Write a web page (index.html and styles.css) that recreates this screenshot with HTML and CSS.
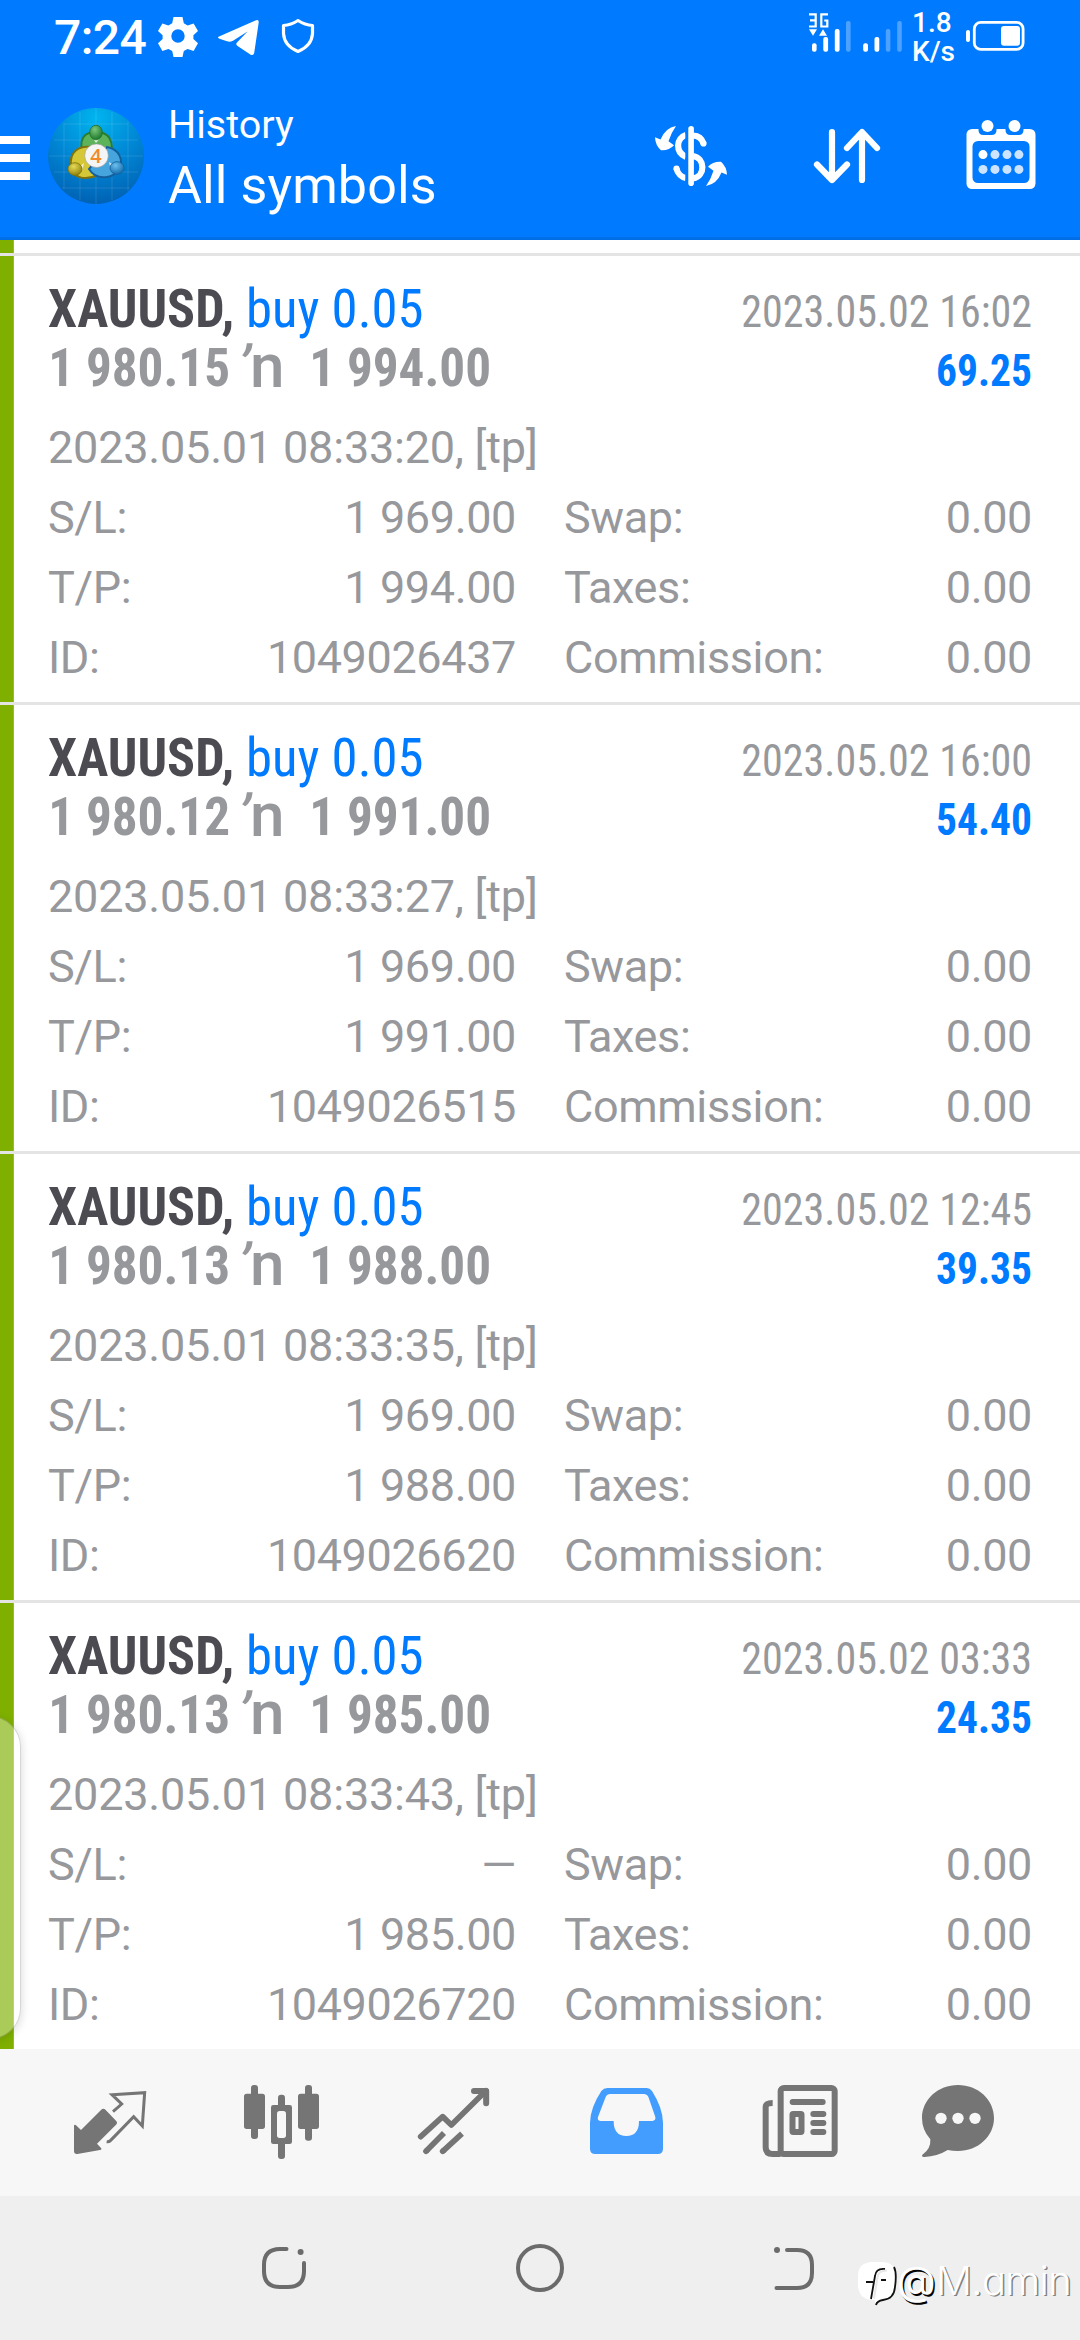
FILE: index.html
```html
<!DOCTYPE html>
<html lang="en">
<head>
<meta charset="utf-8">
<title>History</title>
<link rel="stylesheet" href="styles.css">
</head>
<body>
<div class="screen">
  <header class="top">
    <div class="status">
      <div class="status-left">
        <span class="clock">7:24</span>
        <svg class="st-icons" width="164" height="72" viewBox="156 0 164 72" fill="#fff">
          <path fill-rule="evenodd" d="M173.500 17h9l1.300 6.200 3.800 2.200 6-2 4.400 7.600-4.600 4.300v3.800l4.600 4.200-4.400 7.600-6-2-3.800 2.200-1.300 5.900h-9l-1.300-5.900-3.800-2.200-6 2-4.400-7.600 4.600-4.200v-3.800l-4.600-4.300 4.400-7.600 6 2 3.800-2.200zM178 29.300a6.700 6.700 0 1 0 0 13.400 6.700 6.700 0 0 0 0-13.400z"/>
          <path d="M219 36.500 256 20.300q3-1 2.700 2.200l-4.500 30.500q-.8 3-3.500 1.700l-13.500-9q-1.800-1.400-.2-3.200l10.500-11-14.500 9.200q-3 1.700-6 .6l-7.600-2.600q-2.600-1-.4-2.200z"/>
          <path d="M298 20.500q7 4.500 14.500 5v8q-.8 12.500-14.500 18-13.700-5.500-14.500-18v-8q7.500-.5 14.500-5z" fill="none" stroke="#fff" stroke-width="3.200" stroke-linejoin="round"/>
        </svg>
      </div>
      <div class="status-right">
        <svg width="98" height="72" viewBox="808 0 98 72" fill="#fff">
          <path d="M809 14.300h6.700v12.200H809M810 20.400h5.700M828 14.300h-6.700v12.200h6v-6h-3" fill="none" stroke="#fff" stroke-width="2.200"/>
          <path d="M809 29.200h8l-4 6.600zM819 35.800h8l-4-6.600z"/>
          <rect x="812" y="43.300" width="4.600" height="8.500" rx="2"/>
          <rect x="823.300" y="37" width="4.800" height="14.800" rx="2"/>
          <rect x="834.800" y="29" width="4.800" height="22.800" rx="2"/>
          <rect x="846" y="21" width="4.600" height="30.800" rx="2" opacity=".3"/>
          <rect x="863.200" y="43.300" width="4.800" height="8.500" rx="2"/>
          <rect x="874.500" y="37" width="4.800" height="14.800" rx="2"/>
          <rect x="885.800" y="29" width="4.600" height="22.800" rx="2" opacity=".3"/>
          <rect x="897.200" y="21" width="4.600" height="30.800" rx="2" opacity=".3"/>
        </svg>
        <span class="speed">1.8<br>K/s</span>
        <svg width="62" height="72" viewBox="964 0 62 72">
          <rect x="966" y="30" width="4" height="12" rx="2" fill="#fff"/>
          <rect x="974.300" y="22.400" width="48.800" height="27" rx="6.500" fill="none" stroke="#fff" stroke-width="2.800"/>
          <rect x="1001" y="26" width="19" height="19.700" rx="3" fill="#fff"/>
        </svg>
      </div>
    </div>
    <div class="appbar">
      <div class="menu"><i></i><i></i><i></i></div>
      <svg class="logo" width="96" height="96" viewBox="48 108 96 96">
        <defs>
          <radialGradient id="bg" cx=".5" cy=".1" r=".9"><stop offset="0" stop-color="#00b4ee"/><stop offset=".5" stop-color="#0089d6"/><stop offset="1" stop-color="#0062b4"/></radialGradient>
          <radialGradient id="gr" cx=".4" cy=".3" r=".7"><stop offset="0" stop-color="#7cc67c"/><stop offset="1" stop-color="#1d7a2c"/></radialGradient>
          <radialGradient id="ye" cx=".4" cy=".3" r=".7"><stop offset="0" stop-color="#e6da58"/><stop offset="1" stop-color="#93850d"/></radialGradient>
          <radialGradient id="bl" cx=".4" cy=".3" r=".7"><stop offset="0" stop-color="#6cc0ee"/><stop offset="1" stop-color="#146cab"/></radialGradient>
        </defs>
        <circle cx="96" cy="156" r="48" fill="url(#bg)"/>
        <path d="M64 123v66M80 112v88M96 108v96M112 112v88M128 121v70M64 124h64M54 140h84M49 156h94M54 172h84M62 188h68" stroke="#fff" stroke-opacity=".11" fill="none"/>
        <path d="M84 158c-7-20 1-26 12-26s20 6 14 30z" fill="#5cb35a" stroke="#2b7d32" stroke-width="2"/>
        <path d="M91 147c-12-2-22 5-20 19s16 14 27 9z" fill="#d5c736" stroke="#80720c" stroke-width="2"/>
        <path d="M107 147c12 2 17 13 12 22s-22 13-30 0z" fill="#47a5dd" stroke="#155f9c" stroke-width="2"/>
        <path d="M84 163l-5 4 3 4zM109 162l6 4-4 5zM92 137l4 6 5-6z" fill="#fff" opacity=".75"/>
        <ellipse cx="96" cy="132.500" rx="6.300" ry="7.300" fill="url(#gr)" stroke="#1f6e2b" stroke-width=".8"/>
        <ellipse cx="75" cy="169" rx="7" ry="6.300" fill="url(#ye)" stroke="#80720c" stroke-width=".8"/>
        <ellipse cx="117" cy="168" rx="7" ry="6.300" fill="url(#bl)" stroke="#155f9c" stroke-width=".8"/>
        <circle cx="96.500" cy="155.700" r="11.800" fill="#f5f5f5" stroke="#999" stroke-width=".6"/>
        <text x="96" y="163" text-anchor="middle" class="logo-4">4</text>
      </svg>
      <div class="titles">
        <div class="sub">History</div>
        <div class="title">All symbols</div>
      </div>
      <svg class="swap" width="74" height="66" viewBox="653 123 74 66">
        <g fill="none" stroke="#fff" stroke-width="6.200">
          <path d="M685 135c-10 3-11 17 0 22M675.500 168.500c1 5 5 8.500 9.500 9.500"/>
          <path d="M692 135.500c5 .3 9 3 10.500 8M692 156c12 2 13 20 0 22.500"/>
        </g>
        <g fill="#fff"><circle cx="675.500" cy="168.500" r="3.100"/><circle cx="702.500" cy="143.500" r="3.100"/></g>
        <path d="M684.300 124h3v64h-3z" fill="#007aff"/>
        <rect x="687.300" y="126" width="5.600" height="60" rx="2.800" fill="#fff"/>
        <path id="swirl" d="M675 126q-11 2-15.500 13.500l-5.500-2.300q.3 8 6 13 8 .5 13-5l-5.500-4Q670 133 675 126z" fill="#fff"/>
        <use href="#swirl" transform="rotate(180 690 156)"/>
      </svg>
      <svg class="sort" width="70" height="60" viewBox="811 126 70 60" fill="none" stroke="#fff" stroke-width="6.200" stroke-linecap="round" stroke-linejoin="round">
        <path d="M831 132v47.500M816 164.500l15 15.500 15-15.500M861 180v-47.500M846 148l15-16 15 16"/>
      </svg>
      <svg class="cal" width="70" height="70" viewBox="965.500 120 70 70">
        <rect x="966" y="129" width="69" height="60" rx="5.500" fill="#fff"/>
        <path d="M978 128h18v2q0 5-5 5h-8q-5 0-5-5zM1005 128h18v2q0 5-5 5h-8q-5 0-5-5z" fill="#007aff"/>
        <rect x="972" y="141" width="57" height="42" rx="5.500" fill="#007aff"/>
        <g fill="#fff"><circle cx="987" cy="126" r="6"/><circle cx="1014" cy="126" r="6"/><circle cx="982.500" cy="154.600" r="4.500"/></g>
        <g fill="#cce4ff"><circle cx="994.500" cy="154.600" r="4.500"/><circle cx="1006.500" cy="154.600" r="4.500"/><circle cx="1018.400" cy="154.600" r="4.500"/><circle cx="982.500" cy="169.400" r="4.500"/><circle cx="994.500" cy="169.400" r="4.500"/><circle cx="1006.500" cy="169.400" r="4.500"/><circle cx="1018.400" cy="169.400" r="4.500"/></g>
      </svg>
    </div>
  </header>

  <main class="list">
    <article class="deal">
      <div class="line"><b class="sym">XAUUSD,</b><span class="side">buy 0.05</span><span class="closed">2023.05.02 16:02</span></div>
      <div class="line"><b class="price">1 980.15</b><span class="to"><i>’</i>n</span><b class="price">1 994.00</b><b class="profit">69.25</b></div>
      <div class="opened">2023.05.01 08:33:20, [tp]</div>
      <div class="facts">
        <div><span>S/L:</span><span>1 969.00</span></div><div><span>Swap:</span><span>0.00</span></div>
        <div><span>T/P:</span><span>1 994.00</span></div><div><span>Taxes:</span><span>0.00</span></div>
        <div><span>ID:</span><span>1049026437</span></div><div><span>Commission:</span><span>0.00</span></div>
      </div>
    </article>
    <article class="deal">
      <div class="line"><b class="sym">XAUUSD,</b><span class="side">buy 0.05</span><span class="closed">2023.05.02 16:00</span></div>
      <div class="line"><b class="price">1 980.12</b><span class="to"><i>’</i>n</span><b class="price">1 991.00</b><b class="profit">54.40</b></div>
      <div class="opened">2023.05.01 08:33:27, [tp]</div>
      <div class="facts">
        <div><span>S/L:</span><span>1 969.00</span></div><div><span>Swap:</span><span>0.00</span></div>
        <div><span>T/P:</span><span>1 991.00</span></div><div><span>Taxes:</span><span>0.00</span></div>
        <div><span>ID:</span><span>1049026515</span></div><div><span>Commission:</span><span>0.00</span></div>
      </div>
    </article>
    <article class="deal">
      <div class="line"><b class="sym">XAUUSD,</b><span class="side">buy 0.05</span><span class="closed">2023.05.02 12:45</span></div>
      <div class="line"><b class="price">1 980.13</b><span class="to"><i>’</i>n</span><b class="price">1 988.00</b><b class="profit">39.35</b></div>
      <div class="opened">2023.05.01 08:33:35, [tp]</div>
      <div class="facts">
        <div><span>S/L:</span><span>1 969.00</span></div><div><span>Swap:</span><span>0.00</span></div>
        <div><span>T/P:</span><span>1 988.00</span></div><div><span>Taxes:</span><span>0.00</span></div>
        <div><span>ID:</span><span>1049026620</span></div><div><span>Commission:</span><span>0.00</span></div>
      </div>
    </article>
    <article class="deal">
      <div class="line"><b class="sym">XAUUSD,</b><span class="side">buy 0.05</span><span class="closed">2023.05.02 03:33</span></div>
      <div class="line"><b class="price">1 980.13</b><span class="to"><i>’</i>n</span><b class="price">1 985.00</b><b class="profit">24.35</b></div>
      <div class="opened">2023.05.01 08:33:43, [tp]</div>
      <div class="facts">
        <div><span>S/L:</span><span>—</span></div><div><span>Swap:</span><span>0.00</span></div>
        <div><span>T/P:</span><span>1 985.00</span></div><div><span>Taxes:</span><span>0.00</span></div>
        <div><span>ID:</span><span>1049026720</span></div><div><span>Commission:</span><span>0.00</span></div>
      </div>
    </article>
    <div class="handle"></div>
  </main>

  <nav class="tabs">
    <svg viewBox="-48 27 516 441">
      <path d="M102 256q3-4 6 0l15 14 60-60q7-7 14 0l31 32q6 6 0 12l-57 57 12 13q4 5-3 6l-68 12q-10 1-10-9z" fill="#757575"/>
      <path d="M219 215l26-23-29-28 98-6-7 100-26-28-69 71q-5 5-12 4" fill="none" stroke="#757575" stroke-width="9"/>
    </svg>
    <svg viewBox="468 27 516 441" fill="#757575">
      <rect x="633" y="135" width="21" height="162" rx="9"/><rect x="612" y="161" width="63" height="106" rx="8"/>
      <rect x="795" y="135" width="21" height="167" rx="9"/><rect x="774" y="161" width="63" height="106" rx="8"/>
      <rect x="714" y="164" width="21" height="193" rx="9"/><rect x="693" y="195" width="63" height="117" rx="7"/>
      <rect x="711" y="213" width="27" height="81" rx="8" fill="#f7f7f7"/>
    </svg>
    <svg viewBox="984 27 516 441" fill="none" stroke="#757575" stroke-width="17" stroke-linejoin="round">
      <path d="M1142 290l66-60 26 25 104-103M1158 334l2-2M1208 334l2-2" stroke-linecap="round"/>
      <path d="M1158 334l54-55M1208 334l58-53"/>
      <path d="M1302 153h36.500v37" stroke-linecap="round" stroke-width="18"/>
    </svg>
    <svg viewBox="0 27 516 441">
      <path fill="#439dff" fill-rule="evenodd" d="M202 144H320q10 0 16 9 32 50 33 95v78q0 16-16 16H166q-16 0-16-16v-78q1-45 34-95 7-9 18-9zM211 162q-10 0-14 9l-23 60q-3 11 7 12h40q0 45 38 45t38-45h40q11-1 9-12l-20-58q-4-11-15-11z"/>
    </svg>
    <svg viewBox="516 27 516 441" fill="none" stroke="#757575" stroke-width="18">
      <rect x="722" y="144" width="162" height="198" rx="10"/>
      <path d="M698 189q-21 0-21 12v120q0 21 21 21h24"/>
      <path d="M758 186h90M820 222h30M820 249h30M820 276h30" stroke-linecap="round"/>
      <rect x="757.500" y="222" width="27" height="54" rx="2"/>
    </svg>
    <svg viewBox="1032 27 516 441">
      <path d="M1254 135c60 0 108 44 108 99s-48 99-108 99q-16 0-31-3-30 19-70 21-12-1-4-8 24-18 22-45-25-28-25-64c0-55 48-99 108-99z" fill="#757575"/>
      <g fill="#f7f7f7"><circle cx="1203" cy="235" r="17"/><circle cx="1254" cy="235" r="17"/><circle cx="1305" cy="235" r="17"/></g>
    </svg>
  </nav>

  <footer class="sysnav">
    <svg viewBox="0 2196 360 144" fill="none" stroke="#6b6b6b" stroke-width="4" stroke-linecap="round">
      <path d="M286.500 2249H280q-16 0-16 16v6q0 16 16 16h8q16 0 16-16v-8"/><circle cx="300.600" cy="2252" r="3" fill="#6b6b6b" stroke="none"/>
    </svg>
    <svg viewBox="360 2196 360 144" fill="none" stroke="#6b6b6b" stroke-width="4"><circle cx="540" cy="2268" r="22"/></svg>
    <svg viewBox="720 2196 360 144" fill="none" stroke="#6b6b6b" stroke-width="4" stroke-linecap="round">
      <path d="M787 2250h10q15 0 15 15v8q0 15-15 15h-20.500"/><circle cx="777" cy="2250" r="3" fill="#6b6b6b" stroke="none"/>
    </svg>
    <div class="mark">
      <svg width="42" height="46" viewBox="0 0 42 46">
        <path d="M17 1h10q13 1 13 15v7q0 13-12 15-6 2-7 6l-3-5q-15 0-16-14V15Q2 1 17 1z" fill="#fff"/>
        <path d="M38 6q3 6 1 20-1 12-12 13-6 1-7 5M29 8q-9-1-10 7l-4 23M10 21h7M25 19h5" fill="none" stroke="#111" stroke-width="1.800"/>
        <path d="M31 9.500q-9 0-9.500 7l-3.500 21" fill="none" stroke="#e8e8e8" stroke-width="2"/>
      </svg>
      <span class="at">@</span><span class="name">M.amin</span>
    </div>
  </footer>
</div>
</body>
</html>
```
FILE: styles.css
```css
* { box-sizing: border-box; }
body { margin: 0; font-family: Roboto, sans-serif; }
svg { display: block; flex: none; }
.screen {
  width: 1080px;
  height: 2340px;
  display: flex;
  flex-direction: column;
  overflow: hidden;
  background: #fff;
}

/* header */
.top { height: 240px; background: #007aff; color: #fff; border-bottom: 3px solid #006ee6; }
.status { height: 72px; display: flex; justify-content: space-between; padding: 0 54px; }
.status-left, .status-right { display: flex; }
.clock { width: 102px; font-size: 48px; font-weight: 500; line-height: 75px; letter-spacing: -.6px; }
.speed { width: 52px; margin-left: 6px; padding-top: 7.500px; font-size: 28px; font-weight: 500; line-height: 29.500px; }
.appbar { height: 165px; display: flex; align-items: center; padding-bottom: 3px; }
.menu { width: 30px; margin: 10px 18px 0 0; display: grid; gap: 10px; }
.menu i { height: 8px; background: #fff; }
.logo { margin-top: 6px; }
.logo-4 { font: 600 20px "Open Sans", sans-serif; fill: #f08a2c; }
.titles { flex: 1; margin-left: 24px; padding-top: 5px; white-space: nowrap; }
.sub { font-size: 39.500px; line-height: 60px; }
.title { font-size: 52px; line-height: 62px; letter-spacing: .1px; }
.swap { margin-top: 6px; }
.sort { margin: 6px 84px 0; }
.cal { margin: 3px 44.500px 0 0; }

/* deals */
.list { position: relative; flex: none; height: 1809px; padding-top: 13px; background: linear-gradient(90deg, #7fb000 13px, #93c11f 13px, #93c11f 14px, #fff 14px); }
.deal { height: 449px; padding: 23px 48px 0; border-top: 3px solid #e4e4e4; color: #97989c; font-size: 45px; }
.line { height: 59px; display: flex; line-height: 59px; white-space: nowrap; font-family: "Roboto Condensed", Roboto, sans-serif; font-size: 54px; }
.sym { width: 197.500px; color: #4c4b52; transform: scaleX(.963); transform-origin: 1px 0; }
.side { color: #007aff; transform: scaleX(.977); transform-origin: 0 0; }
.price { width: 198px; transform: scaleX(.948); transform-origin: 4px 0; }
.to { width: 62.500px; display: flex; font: 500 62px/55px Roboto, sans-serif; }
.to i { width: 4px; text-indent: -4px; font-size: 57px; font-style: normal; line-height: 57px; transform: skewX(-10deg); transform-origin: 0 10px; }
.closed, .profit { margin-left: auto; font-size: 45px; line-height: 66px; transform-origin: 100% 0; }
.closed { transform: scaleX(.935); }
.profit { color: #007aff; transform: scaleX(.922); }
.opened { margin-top: 16px; line-height: 70px; letter-spacing: -.2px; }
.facts { display: grid; grid-template-columns: 468px 468px; column-gap: 48px; letter-spacing: -.38px; }
.facts div { display: flex; justify-content: space-between; line-height: 70px; }
.handle {
  position: absolute;
  left: -40px;
  top: 1476px;
  width: 61px;
  height: 323px;
  border-radius: 45px;
  background: rgba(255, 255, 255, .34);
  border: 1px solid rgba(0, 0, 0, .16);
  box-shadow: 1px 2px 8px rgba(0, 0, 0, .13);
}

/* bottom navigation */
.tabs { height: 147px; padding: 0 24px; display: flex; background: #f7f7f7; }
.tabs svg { width: 172px; height: 147px; }
.sysnav { position: relative; height: 144px; display: flex; background: #efefef; }
.sysnav > svg { width: 360px; height: 144px; }
.mark { position: absolute; left: 856px; top: 62px; display: flex; color: #fff; white-space: nowrap; font-family: Inter, sans-serif; line-height: 46px; }
.mark svg { margin-top: 3px; }
.at { width: 39px; margin-left: -1px; font-size: 40px; text-shadow: 1.500px 1.500px 0 #000; }
.name { font-size: 40px; font-weight: 300; font-feature-settings: "cv11"; letter-spacing: -.7px; text-shadow: 1.500px 1px 0 #808080; }
```
